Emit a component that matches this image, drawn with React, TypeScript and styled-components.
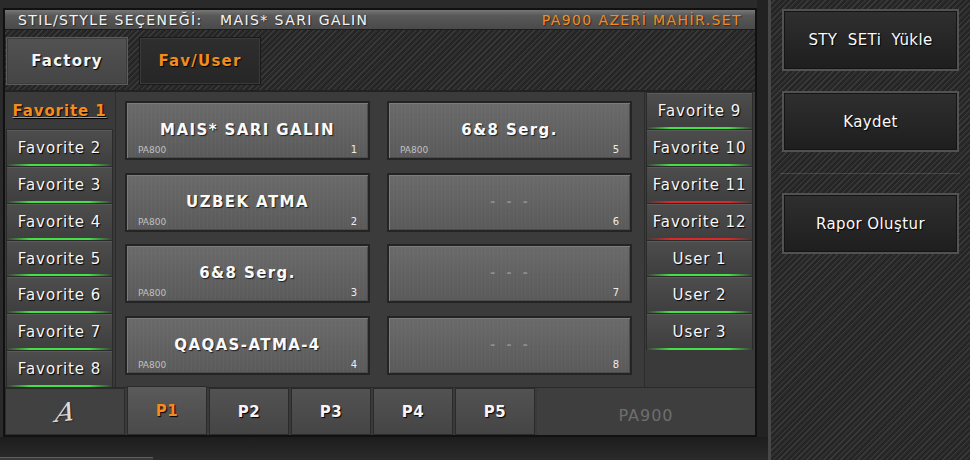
import React from "react";
import styled, { createGlobalStyle, css } from "styled-components";

const GlobalStyle = createGlobalStyle`
  html, body {
    margin: 0;
    padding: 0;
    background: #262626;
  }
  body {
    font-family: "DejaVu Sans", Verdana, sans-serif;
  }
`;

const ORANGE = "#f28c1e";

const carbon = css`
  background-color: #2b2b2b;
  background-image: repeating-linear-gradient(
    135deg,
    #252525 0 2px,
    #3a3a3a 2px 3px,
    #2c2c2c 3px 4px
  );
`;

const Screen = styled.div`
  width: 970px;
  height: 460px;
  display: flex;
  overflow: hidden;
  background: #262626;
`;

const Workspace = styled.div`
  width: 768px;
  display: flex;
  flex-direction: column;
  background: linear-gradient(90deg, #2a2a2a 0 757px, #222 757px);
`;

const Panel = styled.div`
  margin: 8px 0 0 3px;
  width: 754px;
  height: 429px;
  box-sizing: border-box;
  border: 2px solid #111;
  display: flex;
  flex-direction: column;
  background: #3a3a3a;
`;

const TitleBar = styled.div`
  height: 20px;
  box-sizing: border-box;
  display: flex;
  align-items: center;
  justify-content: space-between;
  padding: 0 13px 0 13px;
  background: linear-gradient(#777, #585858 30%, #4a4a4a);
  border-bottom: 1px solid #1c1c1c;
  font-size: 14px;
  letter-spacing: 1.4px;
  white-space: pre;
`;

const TitleText = styled.span<{ $accent?: boolean }>`
  color: ${(p) => (p.$accent ? ORANGE : "#f4f4f4")};
  text-shadow: 1px 1px 1px rgba(0, 0, 0, 0.5);
`;

const TabRow = styled.div`
  height: 62px;
  box-sizing: border-box;
  padding: 7px 0 0 1px;
  display: flex;
  gap: 11px;
  align-items: flex-start;
  border-bottom: 2px solid #222;
  ${carbon}
`;

const Tab = styled.div<{ $active?: boolean }>`
  width: 122px;
  height: 48px;
  box-sizing: border-box;
  display: flex;
  align-items: center;
  justify-content: center;
  font-weight: bold;
  font-size: 15px;
  letter-spacing: 1.2px;
  color: ${(p) => (p.$active ? ORANGE : "#f4f4f4")};
  text-shadow: 1px 1px 1px #000;
  border: 1px solid ${(p) => (p.$active ? "#1a1a1a" : "#5c5c5c")};
  box-shadow: inset 0 0 0 1px ${(p) => (p.$active ? "#3a3a3a" : "#3c3c3c")};
  background: ${(p) =>
    p.$active
      ? "linear-gradient(#2e2e2e, #262626)"
      : "linear-gradient(#525252, #454545)"};
`;

const Body = styled.div`
  height: 295px;
  display: flex;
`;

const FavList = styled.div`
  width: 110px;
  box-sizing: border-box;
  padding: 0 2px 0 1px;
  display: flex;
  flex-direction: column;
  background: #3a3a3a;
`;

const lineColor = { green: "#45e045", red: "#d82a2a" };

const FavItem = styled.div<{ $line: "green" | "red"; $selected?: boolean }>`
  height: 36.9px;
  flex-shrink: 0;
  box-sizing: border-box;
  display: flex;
  align-items: center;
  justify-content: center;
  font-size: 15px;
  letter-spacing: 0.9px;
  color: ${(p) => (p.$selected ? ORANGE : "#f6f6f6")};
  font-weight: ${(p) => (p.$selected ? "bold" : "normal")};
  text-decoration: ${(p) => (p.$selected ? "underline" : "none")};
  text-shadow: 1px 1px 1px #000;
  border: 1px solid ${(p) => (p.$selected ? "transparent" : "#2b2b2b")};
  border-bottom: none;
  background: ${(p) =>
    p.$selected
      ? "#3a3a3a"
      : `linear-gradient(90deg, transparent, ${lineColor[p.$line]} 22%, ${lineColor[p.$line]} 78%, transparent) bottom / 100% 2px no-repeat,
         linear-gradient(#4d4d4d, #3e3e3e)`};
  box-shadow: ${(p) => (p.$selected ? "none" : "inset 0 1px 0 #5a5a5a")};
`;

const PadArea = styled.div`
  flex: 1;
  box-sizing: border-box;
  display: grid;
  grid-template-columns: 245px 245px;
  grid-template-rows: repeat(4, 59px);
  grid-auto-flow: column;
  column-gap: 17px;
  row-gap: 12.7px;
  padding: 9px 0 0 9px;
  border-left: 1px solid #2c2c2c;
  border-right: 1px solid #2c2c2c;
  background: #3b3b3b;
`;

const Pad = styled.div`
  box-sizing: border-box;
  display: grid;
  grid-template-rows: 1fr auto;
  padding: 0 11px 3px 11px;
  border: 2px solid #242424;
  box-shadow: inset 1px 1px 0 #7c7c7c, inset -1px -1px 0 #4c4c4c;
  background: repeating-linear-gradient(
      90deg,
      rgba(255, 255, 255, 0.025) 0 1px,
      transparent 1px 4px
    ),
    linear-gradient(#6a6a6a, #5a5a5a);
`;

const PadTitle = styled.div<{ $empty?: boolean }>`
  grid-row: 1 / 3;
  grid-column: 1;
  align-self: center;
  justify-self: center;
  white-space: pre;
  font-weight: bold;
  font-size: ${(p) => (p.$empty ? "12px" : "15px")};
  letter-spacing: ${(p) => (p.$empty ? "1px" : "1.4px")};
  color: ${(p) => (p.$empty ? "#8e8e8e" : "#fafafa")};
  text-shadow: ${(p) => (p.$empty ? "none" : "1px 1px 1px #1e1e1e")};
  margin-top: 2px;
`;

const PadMeta = styled.div`
  grid-row: 2;
  grid-column: 1;
  display: flex;
  justify-content: space-between;
  align-items: flex-end;
  font-size: 9px;
  line-height: 10px;
  color: #c0c0c0;
`;

const PadNumber = styled.span`
  font-size: 10px;
  color: #ececec;
`;

const BottomRow = styled.div`
  height: 48px;
  display: flex;
  gap: 2px;
  background: #3a3a3a;
  border-top: 1px solid #2a2a2a;
  box-sizing: border-box;
`;

const LogoCell = styled.div`
  width: 120px;
  box-sizing: border-box;
  display: flex;
  align-items: center;
  justify-content: center;
  border: 1px solid #2c2c2c;
  background: #414141;
  font-family: "DejaVu Serif", "Liberation Serif", serif;
  font-style: italic;
  font-size: 26px;
  color: #d8d8d8;
  text-shadow: 1px 1px 1px #222;
`;

const LogoMark = styled.span`
  display: inline-block;
  transform: skewX(-14deg) rotate(-6deg);
`;

const PageTab = styled.div<{ $active?: boolean }>`
  width: 80px;
  box-sizing: border-box;
  display: flex;
  align-items: center;
  justify-content: center;
  margin-top: ${(p) => (p.$active ? "-2px" : "0")};
  font-weight: bold;
  font-size: 15px;
  letter-spacing: 0.5px;
  color: ${(p) => (p.$active ? ORANGE : "#f6f6f6")};
  text-shadow: 1px 1px 1px #000;
  border: 1px solid #2b2b2b;
  background: ${(p) =>
    p.$active
      ? "linear-gradient(#5a5a5a, #4a4a4a)"
      : "linear-gradient(#525252, #454545)"};
`;

const ModelCell = styled.div`
  flex: 1;
  display: flex;
  align-items: center;
  justify-content: center;
  padding-top: 7px;
  font-size: 16px;
  letter-spacing: 1px;
  color: #6e6e6e;
  background: #3e3e3e;
`;

const Footer = styled.div`
  flex: 1;
  display: flex;
  flex-direction: column;
  justify-content: flex-end;
  background: linear-gradient(#1d1d1d, #2b2b2b);
`;

const FooterTab = styled.div`
  width: 153px;
  height: 2px;
  border-top: 1px solid #5e5e5e;
  background: #3a3a3a;
`;

const Side = styled.div`
  flex: 1;
  box-sizing: border-box;
  border-left: 3px solid #474747;
  padding: 9px 0 0 11px;
  display: flex;
  flex-direction: column;
  ${carbon}
`;

const SideButton = styled.button<{ $h: number; $gap: number }>`
  width: 177px;
  height: ${(p) => p.$h}px;
  margin-bottom: ${(p) => p.$gap}px;
  box-sizing: border-box;
  border: 2px solid #525252;
  box-shadow: inset 0 0 0 1px #141414;
  background: linear-gradient(#2f2f2f, #1e1e1e);
  color: #fafafa;
  font-family: "DejaVu Sans", Verdana, sans-serif;
  font-size: 15px;
  letter-spacing: 0.4px;
  white-space: pre;
  text-shadow: 1px 1px 1px #000;
  padding: 0;
  cursor: pointer;
`;

const Divider = styled.div`
  width: 180px;
  height: 1px;
  margin: 0 0 19px -2px;
  background: rgba(255, 255, 255, 0.14);
`;

const leftFavs = Array.from({ length: 8 }, (_, i) => `Favorite ${i + 1}`);

const rightFavs: { name: string; line: "green" | "red" }[] = [
  { name: "Favorite 9", line: "green" },
  { name: "Favorite 10", line: "green" },
  { name: "Favorite 11", line: "red" },
  { name: "Favorite 12", line: "red" },
  { name: "User 1", line: "green" },
  { name: "User 2", line: "green" },
  { name: "User 3", line: "green" },
];

const pads = [
  { title: "MAIS* SARI GALIN", model: "PA800" },
  { title: "UZBEK ATMA", model: "PA800" },
  { title: "6&8 Serg.", model: "PA800" },
  { title: "QAQAS-ATMA-4", model: "PA800" },
  { title: "6&8 Serg.", model: "PA800" },
  { title: "", model: "" },
  { title: "", model: "" },
  { title: "", model: "" },
];

const pages = ["P1", "P2", "P3", "P4", "P5"];

export default function App() {
  return (
    <Screen>
      <GlobalStyle />
      <Workspace>
        <Panel>
          <TitleBar>
            <TitleText>{"STIL/STYLE SEÇENEĞİ:   MAIS* SARI GALIN"}</TitleText>
            <TitleText $accent>PA900 AZERİ MAHİR.SET</TitleText>
          </TitleBar>

          <TabRow>
            <Tab>Factory</Tab>
            <Tab $active>Fav/User</Tab>
          </TabRow>

          <Body>
            <FavList>
              {leftFavs.map((name, i) => (
                <FavItem key={name} $line="green" $selected={i === 0}>
                  {name}
                </FavItem>
              ))}
            </FavList>

            <PadArea>
              {pads.map((pad, i) => (
                <Pad key={i}>
                  <PadTitle $empty={!pad.title}>{pad.title || "-  -  -"}</PadTitle>
                  <PadMeta>
                    <span>{pad.model}</span>
                    <PadNumber>{i + 1}</PadNumber>
                  </PadMeta>
                </Pad>
              ))}
            </PadArea>

            <FavList>
              {rightFavs.map((f) => (
                <FavItem key={f.name} $line={f.line}>
                  {f.name}
                </FavItem>
              ))}
            </FavList>
          </Body>

          <BottomRow>
            <LogoCell>
              <LogoMark>A</LogoMark>
            </LogoCell>
            {pages.map((p, i) => (
              <PageTab key={p} $active={i === 0}>
                {p}
              </PageTab>
            ))}
            <ModelCell>PA900</ModelCell>
          </BottomRow>
        </Panel>
        <Footer>
          <FooterTab />
        </Footer>
      </Workspace>

      <Side>
        <SideButton $h={62} $gap={20}>{"STY  SETi  Yükle"}</SideButton>
        <SideButton $h={61} $gap={21}>Kaydet</SideButton>
        <Divider />
        <SideButton $h={61} $gap={0}>Rapor Oluştur</SideButton>
      </Side>
    </Screen>
  );
}
